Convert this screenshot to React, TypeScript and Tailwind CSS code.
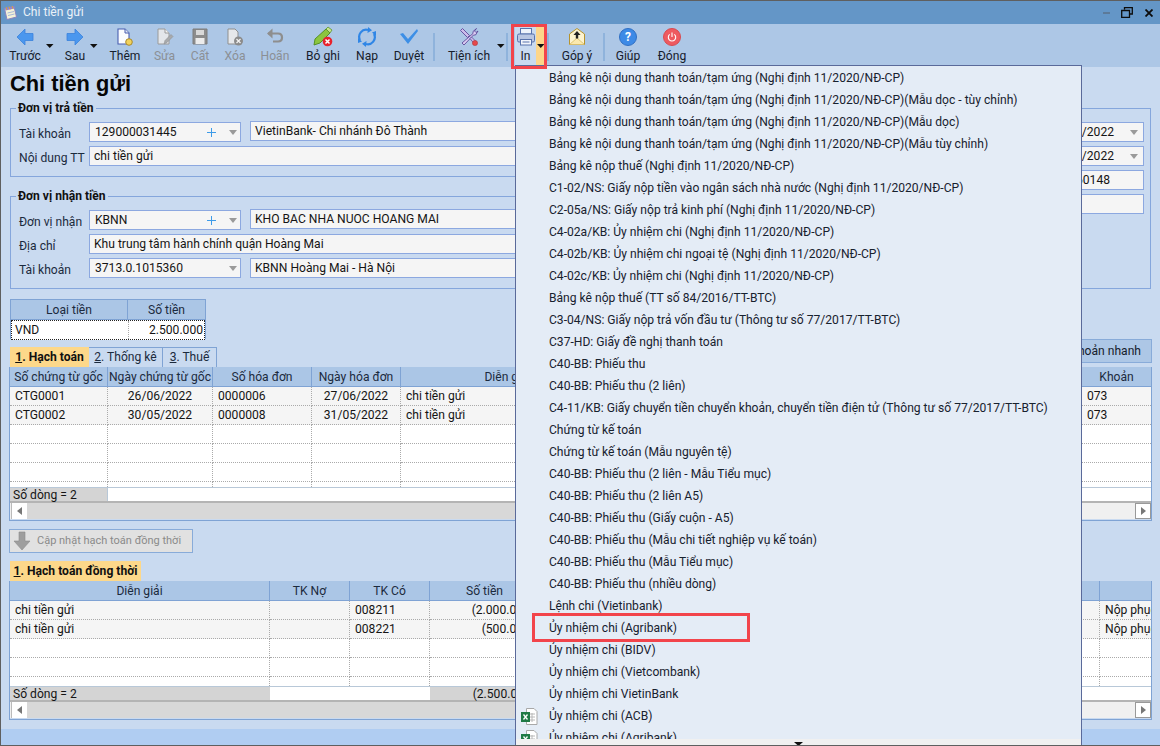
import React from "react";

const Caret = ({ cls = "" }: { cls?: string }) => (
  <svg width="8" height="4" viewBox="0 0 8 4" className={cls}><path d="M0 0H7.5L3.75 4Z" fill="#111" /></svg>
);
const GrayCaret = () => (
  <svg width="8" height="5" viewBox="0 0 8 5" className="shrink-0"><path d="M0 0H8L4 5Z" fill="#9a9a9a" /></svg>
);
const Plus = () => (
  <svg width="9" height="9" viewBox="0 0 9 9" className="shrink-0"><path d="M4.5 0V9M0 4.5H9" stroke="#3d9be8" strokeWidth="1" /></svg>
);

const IBack = () => (
  <svg width="18" height="18" viewBox="0 0 18 18"><path d="M1 9 9 1V5.500H17V12.500H9V17Z" fill="#4b97ee" stroke="#3a82dc" strokeWidth=".8" /></svg>
);
const INext = () => (
  <svg width="18" height="18" viewBox="0 0 18 18"><path d="M17 9 9 1V5.500H1V12.500H9V17Z" fill="#4b97ee" stroke="#3a82dc" strokeWidth=".8" /></svg>
);
const IAdd = () => (
  <svg width="20" height="20" viewBox="0 0 20 20"><path d="M3 2H10L14 6V17H3Z" fill="#fbfcff" stroke="#4a5fb0" strokeWidth="1.1" /><path d="M10 2V6H14" fill="#dfe6f5" stroke="#4a5fb0" /><circle cx="14" cy="15" r="3.300" fill="#f2d25c" stroke="#a98a2c" /></svg>
);
const IEdit = () => (
  <svg width="20" height="20" viewBox="0 0 20 20"><path d="M3 2H10L14 6V17H3Z" fill="#e3e6ea" stroke="#9a9a9a" /><path d="M10 2V6H14" fill="#f3f3f3" stroke="#9a9a9a" /><path d="M9 17 10 13.500 16 7.500 18 9.500 12 15.500Z" fill="#a8aaac" stroke="#8f9092" strokeWidth=".6" /></svg>
);
const ISave = () => (
  <svg width="20" height="20" viewBox="0 0 20 20"><path d="M3 2H17V17H3Z" fill="#8c8c8c" stroke="#7d7d7d" /><rect x="6" y="3" width="8" height="5" fill="#d9d9d9" /><rect x="5.500" y="11" width="9" height="6" fill="#ececec" /></svg>
);
const IDel = () => (
  <svg width="20" height="20" viewBox="0 0 20 20"><path d="M3 2H10L13 5V17H3Z" fill="#e6e8eb" stroke="#8f8f8f" /><circle cx="13.500" cy="14" r="4.500" fill="#8b8b8b" /><path d="M11.500 12 15.500 16M15.500 12 11.500 16" stroke="#f2f2f2" strokeWidth="1.200" /></svg>
);
const IUndo = () => (
  <svg width="20" height="20" viewBox="0 0 20 20"><path d="M3 6.500H13C15.500 6.500 17 8.200 17 10.500S15.500 14.500 13 14.500H8" fill="none" stroke="#8e8e8e" strokeWidth="2.200" /><path d="M7.500 1.500 2 6.500 7.500 11.500Z" fill="#8e8e8e" /></svg>
);
const IUnpost = () => (
  <svg width="24" height="22" viewBox="0 0 24 22"><path d="M3 19 4 13 15 3 19 7 9 17Z" fill="#8cc63f" stroke="#4d8a1c" strokeWidth=".9" /><path d="M15 3 17 1 21 4 19 7Z" fill="#c9e58a" stroke="#4d8a1c" strokeWidth=".7" /><circle cx="16.500" cy="15.500" r="4.800" fill="#e8222c" /><path d="M14.500 13.500 18.500 17.500M18.500 13.500 14.500 17.500" stroke="#fff" strokeWidth="1.500" /></svg>
);
const IReload = () => (
  <svg width="20" height="20" viewBox="0 0 20 20" fill="none"><path d="M3 13A7 7 0 0 1 11 3" stroke="#2f86e6" strokeWidth="2.200" /><path d="M17 7A7 7 0 0 1 9 17" stroke="#2f86e6" strokeWidth="2.200" /><path d="M11 0 15 3.200 10.500 6Z" fill="#2f86e6" /><path d="M9 20 5 16.800 9.500 14Z" fill="#2f86e6" /><path d="M1 11 5 14.500 1 16Z" fill="#2f86e6" /><path d="M19 9 15 5.500 19 4Z" fill="#2f86e6" /></svg>
);
const ICheck = () => (
  <svg width="20" height="18" viewBox="0 0 20 18"><path d="M1 6 4 5 9 11 18 1 19 3 9 16Z" fill="#3d8fe6" /></svg>
);
const ITool = () => (
  <svg width="20" height="20" viewBox="0 0 20 20"><path d="M1.500 3.500 3.500 1.500 10.500 8.500 8.500 10.500Z" fill="#cdbcea" stroke="#5e4a9a" strokeWidth=".9" /><path d="M17.500 1.500 14 4.500V6.500L3 16 5 18 14.500 8H16.500L19 4 17 5.500 15.500 4Z" fill="#dccdf2" stroke="#5e4a9a" strokeWidth=".9" /><path d="M11 11.500 12.500 10 17 14.500 15 16.500Z" fill="#cdbcea" stroke="#5e4a9a" strokeWidth=".8" /><circle cx="16" cy="16" r="2.600" fill="#e5474b" stroke="#a33" strokeWidth=".5" /></svg>
);
const IPrint = () => (
  <svg width="20" height="20" viewBox="0 0 20 20"><rect x="4.500" y="1.500" width="11" height="5.500" fill="#eef3fb" stroke="#5872ac" /><rect x="1.500" y="7" width="17" height="8" rx="1.500" fill="#b9c6e2" stroke="#5872ac" /><rect x="4.500" y="12.500" width="11" height="5.500" fill="#f2f5fb" stroke="#5872ac" /><path d="M6.500 15H13.500" stroke="#5872ac" /></svg>
);
const IMail = () => (
  <svg width="20" height="20" viewBox="0 0 20 20"><path d="M2.500 7 10 1.500 17.500 7V17.500H2.500Z" fill="#fdf3cf" stroke="#b5932f" /><path d="M2.500 17.500 10 11 17.500 17.500" fill="#fbe9ae" stroke="#c9a845" strokeWidth=".6" /><path d="M10 4 13.500 8H11.200V11.500H8.800V8H6.500Z" fill="#222" /></svg>
);
const IPower = () => (
  <svg width="10" height="10" viewBox="0 0 10 10" fill="none"><path d="M2.700 2.400A3.700 3.700 0 1 0 7.300 2.400" stroke="#fff" strokeWidth="1.100" /><path d="M5 .5V5" stroke="#fff" strokeWidth="1.100" /></svg>
);
const IExcel = ({ cls = "" }: { cls?: string }) => (
  <svg width="17" height="17" viewBox="0 0 17 17" className={cls}><path d="M5.500 .5H13L16 3.500V16.500H5.500Z" fill="#fff" stroke="#a8a8a8" /><path d="M8 6H14M8 9H14M8 12H14M11 5V14" stroke="#b8b8b8" /><rect x="0" y="4" width="9" height="10" fill="#1f7a45" /><path d="M2.500 6.500 6.500 11.500M6.500 6.500 2.500 11.500" stroke="#fff" strokeWidth="1.300" /></svg>
);
const INotes = () => (
  <svg width="15" height="16" viewBox="0 0 15 16"><path d="M1.500 3.500 11 1.500 13.500 12 4 14.500Z" fill="#f4f2d8" stroke="#8a84c0" /><path d="M2 3.500 11 1.500 11.500 3.500 2.500 5.500Z" fill="#8f83d8" /><path d="M3 2 4 5M6 1.500 7 4.500M9 1 10 4" stroke="#d8a040" strokeWidth="1" /><path d="M4.500 8 11 6.500M5 10.500 11.500 9" stroke="#a8b8d8" /></svg>
);
const IDown = () => (
  <svg width="18" height="20" viewBox="0 0 18 20"><path d="M6 1H12V10H17L9 19 1 10H6Z" fill="#9e9e9e" stroke="#8c8c8c" strokeWidth=".6" /></svg>
);
const TriL = () => <svg width="5" height="8" viewBox="0 0 5 8"><path d="M5 0V8L0 4Z" fill="#777" /></svg>;
const TriR = () => <svg width="5" height="8" viewBox="0 0 5 8"><path d="M0 0V8L5 4Z" fill="#777" /></svg>;

const Tool = ({ icon, label, cls, off }: { icon: React.ReactNode; label: string; cls: string; off?: boolean }) => (
  <div className={`relative flex flex-col items-center shrink-0 ${cls}`}>
    <div className="h-[23px] flex items-center justify-center">{icon}</div>
    <div className={`h-[16px] leading-[16px] whitespace-nowrap ${off ? "text-[#8b8f95]" : "text-[#16202c]"}`}>{label}</div>
  </div>
);
const Sep = ({ cls = "" }: { cls?: string }) => <div className={`w-[2px] h-[28px] mt-[8px] bg-[#8fb3dc] shrink-0 ${cls}`} />;

const Box = ({ children, cls = "" }: { children?: React.ReactNode; cls?: string }) => (
  <div className={`h-[20px] border border-[#8ca8e0] bg-[#f5f5f5] flex items-center text-[#141414] whitespace-nowrap ${cls}`}>{children}</div>
);
const Combo = ({ text, plus }: { text: string; plus?: boolean }) => (
  <Box cls="w-[152px] shrink-0 pl-[5px] pr-[3px] gap-0">
    <span className="flex-1">{text}</span>
    {plus && <span className="mr-[13px] flex"><Plus /></span>}
    <GrayCaret />
  </Box>
);
const Row = ({ label, children, cls = "" }: { label: string; children: React.ReactNode; cls?: string }) => (
  <div className={`flex h-[20px] ${cls}`}>
    <div className="w-[70px] shrink-0 pt-[3px] leading-[18px] text-[#1b2a3d] whitespace-nowrap">{label}</div>
    {children}
  </div>
);
const Group = ({ title, children, cls = "" }: { title: string; children?: React.ReactNode; cls?: string }) => (
  <div className={`relative border border-[#85a6dc] ${cls}`}>
    {title && <span className="absolute -top-[9px] left-[5px] px-[2px] bg-[#c9daf0] font-bold text-[#101010] leading-[16px] whitespace-nowrap">{title}</span>}
    {children}
  </div>
);

type Cell = { t?: string; a?: "c" | "r" };
const Scrollbar = () => (
  <div className="h-[16px] flex bg-[#f0f0f0] shrink-0">
    <div className="w-[16px] bg-white flex items-center justify-center border-l border-[#bbb] ml-[1px]"><TriL /></div>
    <div className="w-[860px] bg-[#d8d8d8]" />
    <div className="flex-1" />
    <div className="w-[16px] bg-white flex items-center justify-center border border-[#999]"><TriR /></div>
  </div>
);
const CellView = ({ c, last, cellCls }: { c: Cell; last?: boolean; cellCls: string }) => (
  <div className={`h-full px-[5px] flex items-center overflow-hidden whitespace-nowrap border-b border-dotted border-b-[#aaa] ${cellCls} ${last ? "" : "border-r border-r-[#aaa]"} ${c.a === "c" ? "justify-center" : c.a === "r" ? "justify-end" : ""}`}>{c.t}</div>
);
const GridBody = ({ tpl, rows, filled, cellCls = "" }: { tpl: string; rows: Cell[][]; filled: number; cellCls?: string }) => (
  <>
    {rows.map((r, i) => (
      <div key={i} className={`grid h-[19px] shrink-0 ${tpl} ${i < filled ? "bg-[#f5f5f5]" : "bg-white"}`}>
        {r.map((c, j) => <CellView key={j} c={c} last={j === r.length - 1} cellCls={cellCls} />)}
      </div>
    ))}
  </>
);
const Head = ({ tpl, cols }: { tpl: string; cols: string[] }) => (
  <div className={`grid h-[20px] shrink-0 bg-[#abc6e6] border-b border-[#7fa3d4] ${tpl}`}>
    {cols.map((c, i) => (
      <div key={i} className={`flex items-center justify-center pt-[1px] whitespace-nowrap text-[#1b2a3d] ${i < cols.length - 1 ? "border-r border-[#7fa3d4]" : ""}`}>{c}</div>
    ))}
  </div>
);

const TPL1 = "grid-cols-[98px_105px_99px_89px_214px_1fr_69px]";
const TPL2 = "grid-cols-[260px_80px_80px_110px_1fr_51px]";
const e1: Cell[] = [{}, {}, {}, {}, {}, {}, {}];
const e2: Cell[] = [{}, {}, {}, {}, {}, {}];
const rows1: Cell[][] = [
  [{ t: "CTG0001" }, { t: "26/06/2022", a: "c" }, { t: "0000006" }, { t: "27/06/2022", a: "c" }, { t: "chi tiền gửi" }, {}, { t: "073" }],
  [{ t: "CTG0002" }, { t: "30/05/2022", a: "c" }, { t: "0000008" }, { t: "31/05/2022", a: "c" }, { t: "chi tiền gửi" }, {}, { t: "073" }],
  e1, e1, e1,
];
const rows2: Cell[][] = [
  [{ t: "chi tiền gửi" }, {}, { t: "008211" }, { t: "(2.000.000)", a: "r" }, {}, { t: "Nộp phục hồi" }],
  [{ t: "chi tiền gửi" }, {}, { t: "008221" }, { t: "(500.000)", a: "r" }, {}, { t: "Nộp phục hồi" }],
  e2, e2,
];

const base = "Bảng kê nội dung thanh toán/tạm ứng (Nghị định 11/2020/NĐ-CP)";
const menu = [
  base, base + "(Mẫu dọc - tùy chỉnh)", base + "(Mẫu dọc)", base + "(Mẫu tùy chỉnh)",
  "Bảng kê nộp thuế (Nghị định 11/2020/NĐ-CP)",
  "C1-02/NS: Giấy nộp tiền vào ngân sách nhà nước (Nghị định 11/2020/NĐ-CP)",
  "C2-05a/NS: Giấy nộp trả kinh phí (Nghị định 11/2020/NĐ-CP)",
  "C4-02a/KB: Ủy nhiệm chi (Nghị định 11/2020/NĐ-CP)",
  "C4-02b/KB: Ủy nhiệm chi ngoại tệ (Nghị định 11/2020/NĐ-CP)",
  "C4-02c/KB: Ủy nhiệm chi (Nghị định 11/2020/NĐ-CP)",
  "Bảng kê nộp thuế (TT số 84/2016/TT-BTC)",
  "C3-04/NS: Giấy nộp trả vốn đầu tư (Thông tư số 77/2017/TT-BTC)",
  "C37-HD: Giấy đề nghị thanh toán",
  "C40-BB: Phiếu thu",
  "C40-BB: Phiếu thu (2 liên)",
  "C4-11/KB: Giấy chuyển tiền chuyển khoản, chuyển tiền điện tử (Thông tư số 77/2017/TT-BTC)",
  "Chứng từ kế toán",
  "Chứng từ kế toán (Mẫu nguyên tệ)",
  "C40-BB: Phiếu thu (2 liên - Mẫu Tiểu mục)",
  "C40-BB: Phiếu thu (2 liên A5)",
  "C40-BB: Phiếu thu (Giấy cuộn - A5)",
  "C40-BB: Phiếu thu (Mẫu chi tiết nghiệp vụ kế toán)",
  "C40-BB: Phiếu thu (Mẫu Tiểu mục)",
  "C40-BB: Phiếu thu (nhiều dòng)",
  "Lệnh chi (Vietinbank)",
  "Ủy nhiệm chi (Agribank)",
  "Ủy nhiệm chi (BIDV)",
  "Ủy nhiệm chi (Vietcombank)",
  "Ủy nhiệm chi VietinBank",
  "Ủy nhiệm chi (ACB)",
  "Ủy nhiệm chi (Agribank)",
];

const Underlined = ({ n, text }: { n: string; text: string }) => (
  <span><span className="underline">{n}</span>{text}</span>
);

export default function App() {
  return (
    <div className="relative w-[1160px] h-[746px] overflow-hidden flex flex-col border-l border-t border-b border-[#5f5f5f] text-[12.1px] font-['Roboto','Liberation_Sans',sans-serif] bg-[#c9daf0]">
      {/* title bar */}
      <div className="h-[23px] shrink-0 bg-[#6496c7] flex items-center pl-[2px] pr-[7px] text-[#eaf1f8]">
        <INotes />
        <span className="ml-[5px] text-[12.1px]">Chi tiền gửi</span>
        <div className="ml-auto flex items-center">
          <div className="w-[7px] h-[2px] bg-[#5c7a99]" />
          <svg width="12" height="11" viewBox="0 0 12 11" className="ml-[11px]"><path d="M3.500 2.500V.7H11.300V7H9M.7 3.500H8.500V10.300H.7Z" fill="none" stroke="#0c0c0c" strokeWidth="1.300" /></svg>
          <svg width="8" height="8" viewBox="0 0 8 8" className="ml-[12px]"><path d="M.5.5 7.500 7.500M7.500.5.500 7.500" stroke="#0c0c0c" strokeWidth="1.800" /></svg>
        </div>
      </div>

      {/* toolbar */}
      <div className="h-[43px] shrink-0 bg-[#adc7e6] flex pt-[1px]">
        <Tool cls="w-[48px]" icon={<IBack />} label="Trước" />
        <Caret cls="relative top-[19px] -ml-[3px] -mr-[5px] shrink-0" />
        <Tool cls="w-[48px] ml-[2px]" icon={<INext />} label="Sau" />
        <Caret cls="relative top-[19px] -ml-[9px] mr-[1px] shrink-0" />
        <Tool cls="w-[44px] ml-[4px]" icon={<IAdd />} label="Thêm" />
        <Tool cls="w-[35px]" icon={<IEdit />} label="Sửa" off />
        <Tool cls="w-[36px]" icon={<ISave />} label="Cất" off />
        <Tool cls="w-[34px]" icon={<IDel />} label="Xóa" off />
        <Tool cls="w-[46px]" icon={<IUndo />} label="Hoãn" off />
        <Tool cls="w-[50px]" icon={<IUnpost />} label="Bỏ ghi" />
        <Tool cls="w-[38px]" icon={<IReload />} label="Nạp" />
        <Tool cls="w-[46px]" icon={<ICheck />} label="Duyệt" />
        <Sep cls="ml-[1px]" />
        <Tool cls="w-[64px] ml-[2px]" icon={<ITool />} label="Tiện ích" />
        <Caret cls="relative top-[19px] -ml-[4px] -mr-[4px] shrink-0" />
        <Sep cls="ml-[5px]" />
        <div className="ml-[7px] w-[30px] h-[42px] flex shrink-0 relative bg-[#c9daf0]">
          <Tool cls="w-[21px]" icon={<IPrint />} label="In" />
          <div className="w-[9px] bg-[#fdd68a] flex justify-center pt-[19px]"><Caret /></div>
        </div>
        <Sep cls="ml-[2px]" />
        <Tool cls="w-[50px] ml-[3px]" icon={<IMail />} label="Góp ý" />
        <Sep cls="ml-[1px]" />
        <Tool cls="w-[46px]" icon={<div className="w-[18px] h-[18px] rounded-full bg-[#3d8ae6] border border-[#2f6fc4] text-white font-bold text-[12px] flex items-center justify-center">?</div>} label="Giúp" />
        <Tool cls="w-[42px]" icon={<div className="w-[18px] h-[18px] rounded-full bg-[#ee5a60] border border-[#d84a50] flex items-center justify-center"><IPower /></div>} label="Đóng" />
      </div>

      {/* body */}
      <div className="flex-1 min-h-0 flex flex-col pl-[8px] pr-[8px] overflow-hidden">
        <h1 className="h-[41px] shrink-0 pl-[1px] font-['Liberation_Sans',sans-serif] font-bold text-[21.8px] leading-[34px] text-[#060606]">Chi tiền gửi</h1>

        <div className="h-[181px] shrink-0 flex gap-[10px] pl-[1px] pr-[1px]">
          <div className="flex-1 min-w-0 flex flex-col justify-between">
            <Group title="Đơn vị trả tiền" cls="h-[69px] pl-[8px] pt-[13px] flex flex-col gap-[4px]">
              <Row label="Tài khoản">
                <Combo text="129000031445" plus />
                <Box cls="flex-1 ml-[9px] -mt-[1px] pl-[4px] pt-[1px]">VietinBank- Chi nhánh Đô Thành</Box>
              </Row>
              <Row label="Nội dung TT">
                <Box cls="flex-1 pl-[4px]">chi tiền gửi</Box>
              </Row>
            </Group>
            <Group title="Đơn vị nhận tiền" cls="h-[93px] pl-[8px] pt-[13px] flex flex-col gap-[4px]">
              <Row label="Đơn vị nhận">
                <Combo text="KBNN" plus />
                <Box cls="flex-1 ml-[9px] -mt-[1px] pl-[4px] pt-[1px]">KHO BAC NHA NUOC HOANG MAI</Box>
              </Row>
              <Row label="Địa chỉ">
                <Box cls="flex-1 pl-[4px]">Khu trung tâm hành chính quận Hoàng Mai</Box>
              </Row>
              <Row label="Tài khoản">
                <Combo text="3713.0.1015360" />
                <Box cls="flex-1 ml-[9px] pl-[4px]">KBNN Hoàng Mai - Hà Nội</Box>
              </Row>
            </Group>
          </div>
          <Group title="" cls="w-[250px] shrink-0 pl-[60px] pr-[6px] pt-[13px] flex flex-col gap-[4px]">
            <Box cls="justify-end pr-[5px]"><span className="mr-[16px]">07/07/2022</span><GrayCaret /></Box>
            <Box cls="justify-end pr-[5px]"><span className="mr-[16px]">07/07/2022</span><GrayCaret /></Box>
            <Box cls="justify-end pr-[33px]">UNC0060148</Box>
            <Box />
          </Group>
        </div>

        {/* currency table */}
        <div className="mt-[10px] ml-[1px] w-[196px] h-[40px] shrink-0 border border-[#7fa3d4] flex flex-col">
          <Head tpl="grid-cols-[117px_1fr]" cols={["Loại tiền", "Số tiền"]} />
          <div className="grid grid-cols-[117px_1fr] flex-1 bg-white border border-dotted border-[#222] text-[#141414]">
            <div className="pl-[3px] flex items-center border-r border-dotted border-[#aaa]">VND</div>
            <div className="pr-[1px] flex items-center justify-end">2.500.000</div>
          </div>
        </div>

        {/* tabs */}
        <div className="h-[28px] shrink-0 flex items-end justify-between">
          <div className="flex h-[20px] pl-[1px] text-[#1b2a3d]">
            <div className="w-[79px] bg-[#fdd88a] font-bold text-[#101010] flex items-center justify-center whitespace-nowrap"><Underlined n="1" text=". Hạch toán" /></div>
            <div className="w-[74px] border border-b-0 border-[#7fa3d4] border-l-0 flex items-center justify-center"><Underlined n="2" text=". Thống kê" /></div>
            <div className="w-[54px] border border-b-0 border-[#7fa3d4] border-l-0 flex items-center justify-center"><Underlined n="3" text=". Thuế" /></div>
          </div>
          <div className="self-start h-[24px] w-[200px] bg-[#adc7e6] border border-[#88abd9] flex items-center justify-end pr-[10px] text-[#16202c] whitespace-nowrap">Chọn tài khoản nhanh</div>
        </div>

        {/* grid 1 */}
        <div className="h-[154px] shrink-0 border-x border-b border-[#7fa3d4] flex flex-col text-[#141414]">
          <Head tpl={TPL1} cols={["Số chứng từ gốc", "Ngày chứng từ gốc", "Số hóa đơn", "Ngày hóa đơn", "Diễn giải", "", "Khoản"]} />
          <GridBody tpl={TPL1} rows={rows1} filled={2} />
          <div className={`grid h-[5px] shrink-0 bg-white ${TPL1}`}>
            {e1.slice(0, 6).map((_, i) => <div key={i} className="border-r border-dotted border-[#aaa]" />)}
          </div>
          <div className="h-[16px] shrink-0 flex bg-white border-t border-[#b8c8d8] border-b-2 border-b-[#b4b4b4]">
            <div className="w-[98px] bg-[#d4d4d4] pl-[3px] pt-[1px] flex items-center whitespace-nowrap border-r border-[#b8c8d8]">Số dòng = 2</div>
          </div>
          <Scrollbar />
        </div>

        {/* update button */}
        <div className="mt-[8px] w-[184px] h-[24px] shrink-0 bg-[#e1e1e1] border border-[#88abd9] flex items-center pl-[3px] text-[#8a8a8a] text-[11px] whitespace-nowrap">
          <IDown />
          <span className="ml-[6px]">Cập nhật hạch toán đồng thời</span>
        </div>

        {/* tab 2 */}
        <div className="mt-[8px] h-[20px] ml-[1px] w-[131px] shrink-0 pt-[1px] bg-[#fdd88a] font-bold text-[#101010] flex items-center justify-center whitespace-nowrap"><Underlined n="1" text=". Hạch toán đồng thời" /></div>

        {/* grid 2 */}
        <div className="h-[139px] shrink-0 border-x border-b border-[#7fa3d4] flex flex-col text-[#141414]">
          <Head tpl={TPL2} cols={["Diễn giải", "TK Nợ", "TK Có", "Số tiền", "", ""]} />
          <GridBody tpl={TPL2} rows={rows2} filled={2} cellCls="pt-[1px]" />
          <div className={`grid h-[9px] shrink-0 bg-white ${TPL2}`}>
            {e2.slice(0, 5).map((_, i) => <div key={i} className="border-r border-dotted border-[#aaa]" />)}
          </div>
          <div className="h-[16px] shrink-0 flex bg-white border-t border-[#b8c8d8] border-b-2 border-b-[#b4b4b4]">
            <div className="w-[260px] bg-[#d4d4d4] pl-[3px] pt-[1px] flex items-center whitespace-nowrap">Số dòng = 2</div>
            <div className="w-[160px]" />
            <div className="w-[110px] bg-[#d4d4d4] pr-[5px] pt-[1px] flex items-center justify-end whitespace-nowrap">(2.500.000)</div>
          </div>
          <Scrollbar />
        </div>
      </div>

      <div className="h-[16px] shrink-0 bg-[#b0cdf2]" />

      {/* dropdown menu */}
      <div className="absolute left-[514px] top-[64px] w-[567px] h-[681px] bg-[#e4ecf6] border-x border-t border-[#5a6a9a] flex flex-col text-[#17212e]">
        <div className="flex-1 min-h-0 overflow-hidden pt-[1px]">
          {menu.map((m, i) => (
            <div key={i} className="h-[22px] flex items-center whitespace-nowrap relative pl-[33px]">
              {(i === 29 || i === 30) && <IExcel cls="absolute left-[5px] top-[3px]" />}
              {m}
            </div>
          ))}
        </div>
        <div className="h-[7px] shrink-0 bg-[#f0f0f0] flex justify-center">
          <svg width="9" height="4" viewBox="0 0 9 4" className="mt-[3px]"><path d="M0 0H9L4.500 4Z" fill="#111" /></svg>
        </div>
      </div>

      {/* annotations */}
      <div className="absolute left-[510px] top-[23px] w-[36px] h-[45px] border-[3px] border-[#f2444b]" />
      <div className="absolute left-[531px] top-[612px] w-[218px] h-[29px] border-[3px] border-[#f2444b]" />
    </div>
  );
}
